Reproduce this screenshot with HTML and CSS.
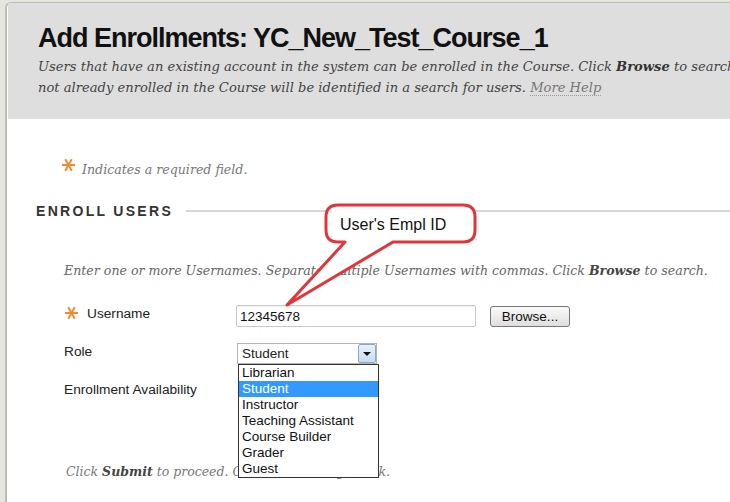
FILE: index.html
```html
<!DOCTYPE html>
<html lang="en">
<head>
    <meta charset="UTF-8">
    <meta name="viewport" content="width=device-width, initial-scale=1.0">
    <title>Add Enrollments</title>
    <link rel="stylesheet" href="styles.css">
</head>
<body>
    <div class="page">
        <div class="header">
            <h1>Add Enrollments: YC_New_Test_Course_1</h1>
            <p class="intro">
                <span class="line">Users that have an existing account in the system can be enrolled in the Course. Click <b>Browse</b> to search for users. Users</span>
                <span class="line">not already enrolled in the Course will be identified in a search for users. <a class="help">More Help</a></span>
            </p>
        </div>

        <div class="content">
            <p class="required"><span class="star"></span>Indicates a required field.</p>

            <div class="step-title">
                <h2>ENROLL USERS</h2>
                <span class="rule"></span>
            </div>

            <div class="step">
                <p class="instructions">Enter one or more Usernames. Separate multiple Usernames with commas. Click <b>Browse</b> to search.</p>

                <div class="field">
                    <label class="label"><span class="star"></span>Username</label>
                    <input class="text-input" type="text" value="12345678">
                    <button class="browse">Browse...</button>
                </div>

                <div class="field">
                    <label class="label">Role</label>
                    <div class="select">
                        <span class="select-value">Student</span>
                        <span class="select-btn"><span class="arrow"></span></span>
                        <ul class="options">
                            <li>Librarian</li>
                            <li class="selected">Student</li>
                            <li>Instructor</li>
                            <li>Teaching Assistant</li>
                            <li>Course Builder</li>
                            <li>Grader</li>
                            <li>Guest</li>
                        </ul>
                    </div>
                </div>

                <div class="field short">
                    <label class="label">Enrollment Availability</label>
                </div>
            </div>

            <p class="submit-note">Click <b>Submit</b> to proceed. Click <b>Cancel</b> to go back.</p>
        </div>
    </div>

    <!-- annotation drawn over the screenshot -->
    <svg class="callout" width="200" height="110" viewBox="0 0 200 110">
        <path d="M58 5 H183 Q195 5 195 17 V30 Q195 42 183 42 H113 L7 105 L65 42 H58 Q46 42 46 30 V17 Q46 5 58 5 Z"
              fill="#fff" stroke="#e0363a" stroke-width="3" stroke-linejoin="round"/>
        <text x="60" y="30" class="callout-text">User's Empl ID</text>
    </svg>
</body>
</html>
```

FILE: styles.css
```css
body {
    margin: 0;
    background-color: #e6e6e0;
    font-family: "Liberation Sans", Arial, sans-serif;
    color: #222;
    overflow: hidden;
}

.page {
    margin: 2px 0 0 5px;
    min-height: 500px;
    background-color: #fff;
    border-left: 2px solid #bcbcb4;
    border-top: 1px solid #bcbcb4;
    border-top-left-radius: 6px;
    overflow: hidden;
}

.header {
    margin-left: 1px;
    padding: 19px 0 21px 30px;
    background-color: #dedede;
    white-space: nowrap;
}

h1 {
    margin: 0;
    font-size: 27px;
    line-height: 32px;
    letter-spacing: -1px;
    color: #111;
}

.intro {
    margin: 2px 0 0;
    font-family: "DejaVu Serif", Georgia, serif;
    font-style: italic;
    font-size: 13.1px;
    line-height: 21px;
    color: #444;
}

.intro .line {
    display: block;
}

.intro b {
    color: #333;
}

.help {
    color: #777;
    border-bottom: 1px dotted #999;
}

.content {
    padding: 40px 0 0 29px;
}

.star {
    display: inline-block;
    width: 13px;
    height: 12px;
    margin-right: 7px;
    vertical-align: -1px;
    background:
        linear-gradient(#f08a2c, #f08a2c) center / 13px 2px no-repeat;
    position: relative;
}

.star::before,
.star::after {
    content: "";
    position: absolute;
    left: 0;
    top: 5px;
    width: 13px;
    height: 2px;
    background-color: #f08a2c;
    transform: rotate(60deg);
}

.star::after {
    transform: rotate(-60deg);
}

.required {
    margin: 0 0 21px 26px;
    font-family: "DejaVu Serif", Georgia, serif;
    font-style: italic;
    font-size: 12.6px;
    line-height: 20px;
    color: #777;
}

.required .star {
    vertical-align: 3px;
    margin-right: 7px;
}

.step-title {
    display: flex;
    align-items: center;
    height: 20px;
}

h2 {
    margin: 0;
    font-size: 14px;
    letter-spacing: 2.3px;
    color: #333;
}

.rule {
    flex: 1;
    height: 2px;
    margin-left: 13px;
    background-color: #d8d8d8;
}

.step {
    padding-left: 28px;
}

.instructions {
    margin: 40px 0 24px;
    font-family: "DejaVu Serif", Georgia, serif;
    font-style: italic;
    font-size: 12.6px;
    line-height: 20px;
    color: #666;
    white-space: nowrap;
}

.instructions b,
.submit-note b {
    color: #444;
}

.field {
    display: flex;
    align-items: flex-start;
    height: 22px;
    margin-bottom: 16px;
}

.field.short {
    height: 18px;
}

.label {
    width: 172px;
    flex-shrink: 0;
    font-size: 13.7px;
    line-height: 18px;
    color: #222;
}

.label .star {
    margin-left: 1px;
    margin-right: 9px;
}

.text-input {
    box-sizing: border-box;
    width: 240px;
    height: 22px;
    margin: 0;
    padding: 0 3px;
    border: 1px solid #cacaca;
    border-radius: 2px;
    box-shadow: inset 0 1px 1px rgba(0, 0, 0, 0.06);
    font-family: "Liberation Sans", Arial, sans-serif;
    font-size: 13.5px;
    color: #111;
}

.browse {
    box-sizing: border-box;
    width: 80px;
    height: 21px;
    margin: 1px 0 0 14px;
    padding: 0;
    border: 1px solid #777;
    border-radius: 3px;
    background: linear-gradient(#fafafa, #dedede);
    font-family: "Liberation Sans", Arial, sans-serif;
    font-size: 13.5px;
    color: #111;
}

.select {
    position: relative;
    box-sizing: border-box;
    width: 140px;
    height: 21px;
    margin-left: 1px;
    display: flex;
    align-items: center;
    border: 1px solid #b4b4b4;
    background-color: #fff;
}

.select-value {
    flex: 1;
    padding-left: 4px;
    font-size: 13.5px;
}

.select-btn {
    box-sizing: border-box;
    width: 18px;
    height: 19px;
    display: flex;
    align-items: center;
    justify-content: center;
    border: 1px solid #8aa8c8;
    border-radius: 2px;
    background: linear-gradient(#e8f1fa, #c6dbf0);
}

.arrow {
    width: 0;
    height: 0;
    border-left: 4px solid transparent;
    border-right: 4px solid transparent;
    border-top: 4px solid #111;
    margin-top: 1px;
}

.options {
    position: absolute;
    top: 20px;
    left: 0;
    z-index: 2;
    box-sizing: border-box;
    width: 141px;
    margin: 0;
    padding: 0;
    list-style: none;
    border: 1px solid #333;
    background-color: #fff;
}

.options li {
    height: 16px;
    padding-left: 3px;
    font-size: 13.5px;
    line-height: 16px;
    color: #111;
}

.options li.selected {
    background-color: #3399ff;
    color: #fff;
}

.submit-note {
    margin: 63px 0 0 30px;
    font-family: "DejaVu Serif", Georgia, serif;
    font-style: italic;
    font-size: 12.5px;
    line-height: 20px;
    color: #777;
}

.callout {
    position: absolute;
    left: 280px;
    top: 200px;
    z-index: 3;
}

.callout-text {
    font-family: "Liberation Sans", Arial, sans-serif;
    font-size: 16px;
    fill: #111;
}
```
